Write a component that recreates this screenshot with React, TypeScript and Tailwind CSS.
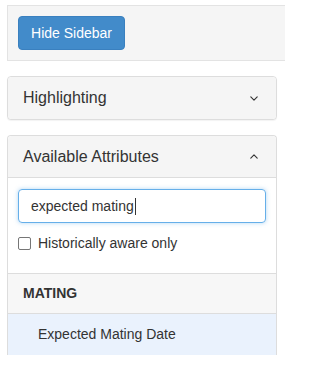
const FONT = '"Liberation Sans", Arial, sans-serif';

const ChevronDown = () => (
  <svg viewBox="0 0 10 6" className="h-[5px] w-[8px]" fill="none" stroke="#333" strokeWidth={1.4}>
    <path d="M1 1l4 4 4-4" strokeLinecap="round" strokeLinejoin="round" />
  </svg>
);
const ChevronUp = () => (
  <svg viewBox="0 0 10 6" className="h-[5px] w-[8px]" fill="none" stroke="#333" strokeWidth={1.4}>
    <path d="M1 5l4-4 4 4" strokeLinecap="round" strokeLinejoin="round" />
  </svg>
);

export default function App() {
  return (
    <div className="h-[365px] w-[285px] overflow-hidden bg-white text-[#333]" style={{ fontFamily: FONT }}>
      {/* top well */}
      <div className="ml-[7px] mr-[-20px] mt-[5px] border border-[#e3e3e3] bg-[#f5f5f5] p-[10px]">
        <button className="block h-[34px] w-[107px] rounded-[4px] border border-[#3a80bf] bg-[#428bca] text-[14px] text-white">
          Hide Sidebar
        </button>
      </div>

      {/* highlighting */}
      <div className="ml-[7px] mt-[15px] w-[270px] rounded-[4px] border border-[#ddd] bg-white shadow-[0_1px_1px_rgba(0,0,0,0.05)]">
        <div className="flex h-[42px] items-center justify-between rounded-[4px] bg-[#f5f5f5] px-[15px]">
          <span className="text-[16px]">Highlighting</span>
          <span className="mr-[3px] flex items-center"><ChevronDown /></span>
        </div>
      </div>

      {/* available attributes */}
      <div className="ml-[7px] mt-[15px] w-[270px] rounded-t-[4px] border border-b-0 border-[#ddd] bg-white">
        <div className="flex h-[42px] items-center justify-between rounded-t-[4px] border-b border-[#ddd] bg-[#f5f5f5] px-[15px]">
          <span className="text-[16px]">Available Attributes</span>
          <span className="mr-[3px] flex items-center"><ChevronUp /></span>
        </div>
        <div className="px-[10px] pt-[11px]">
          <div className="flex h-[34px] w-[248px] items-center rounded-[4px] border border-[#66afe9] px-[12px] text-[14px] shadow-[0_0_4px_rgba(102,175,233,0.5)]">
            <span>expected mating</span>
            <span className="ml-px h-[17px] w-px bg-[#333]" />
          </div>
          <label className="mt-[12px] flex h-[16px] items-center gap-[7px] text-[14px]">
            <span className="h-[13px] w-[13px] rounded-[2px] border border-[#767676] bg-white" />
            <span>Historically aware only</span>
          </label>
        </div>
        <div className="mt-[22px] border-t border-[#ddd]">
          <div className="flex h-[40px] items-center border-b border-[#ddd] bg-[#f7f7f7] px-[15px] text-[14px] font-bold">
            MATING
          </div>
          <div className="flex h-[41px] items-center bg-[#eaf2fd] pl-[30px] text-[14px]">
            Expected Mating Date
          </div>
        </div>
      </div>
    </div>
  );
}
